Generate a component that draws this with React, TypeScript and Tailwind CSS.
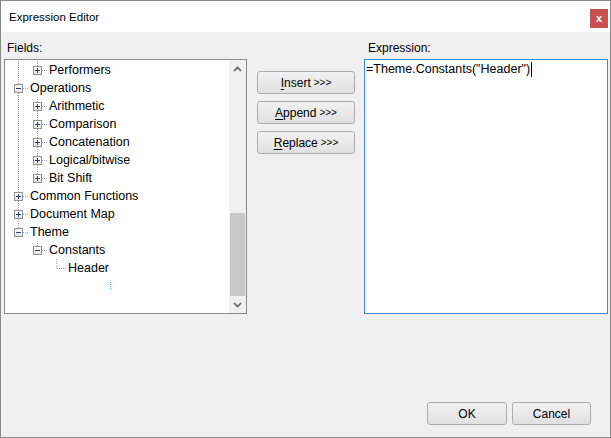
import React from 'react';

type Node = {
  label: string;
  level: number;
  // for each ancestor level, whether a vertical guide passes through
  guides: boolean[];
  last: boolean;
  box: 'plus' | 'minus' | null;
};

const rows: Node[] = [
  { label: 'Performers', level: 1, guides: [true], last: true, box: 'plus' },
  { label: 'Operations', level: 0, guides: [], last: false, box: 'minus' },
  { label: 'Arithmetic', level: 1, guides: [true], last: false, box: 'plus' },
  { label: 'Comparison', level: 1, guides: [true], last: false, box: 'plus' },
  { label: 'Concatenation', level: 1, guides: [true], last: false, box: 'plus' },
  { label: 'Logical/bitwise', level: 1, guides: [true], last: false, box: 'plus' },
  { label: 'Bit Shift', level: 1, guides: [true], last: true, box: 'plus' },
  { label: 'Common Functions', level: 0, guides: [], last: false, box: 'plus' },
  { label: 'Document Map', level: 0, guides: [], last: false, box: 'plus' },
  { label: 'Theme', level: 0, guides: [], last: true, box: 'minus' },
  { label: 'Constants', level: 1, guides: [false], last: true, box: 'minus' },
  { label: 'Header', level: 2, guides: [false, false], last: true, box: null },
];

const LINE = '#a0a0a0';

function GuideCell({ on }: { on: boolean }) {
  return (
    <svg width="19" height="18" className="shrink-0" shapeRendering="crispEdges">
      {on && <line x1="9.5" y1="0" x2="9.5" y2="18" stroke={LINE} strokeDasharray="1 1" />}
    </svg>
  );
}

function NodeCell({ last, box }: { last: boolean; box: Node['box'] }) {
  return (
    <svg width="19" height="18" className="shrink-0" shapeRendering="crispEdges">
      <line x1="9.5" y1="0" x2="9.5" y2={last ? 9 : 18} stroke={LINE} strokeDasharray="1 1" />
      <line x1="10" y1="9.5" x2="19" y2="9.5" stroke={LINE} strokeDasharray="1 1" />
      {box && (
        <>
          <defs>
            <linearGradient id="bx" x1="0" y1="0" x2="0" y2="1">
              <stop offset="0" stopColor="#ffffff" />
              <stop offset="1" stopColor="#e4e4e4" />
            </linearGradient>
          </defs>
          <rect x="5.5" y="5.5" width="8" height="8" fill="url(#bx)" stroke="#919191" />
          <line x1="7" y1="9.5" x2="12" y2="9.5" stroke="#23407a" />
          {box === 'plus' && <line x1="9.5" y1="7" x2="9.5" y2="12" stroke="#23407a" />}
        </>
      )}
    </svg>
  );
}

function Chevron({ up }: { up?: boolean }) {
  return (
    <svg width="9" height="6" viewBox="0 0 9 6">
      <polyline
        points={up ? '1,5 4.5,1.5 8,5' : '1,1 4.5,4.5 8,1'}
        fill="none"
        stroke="#606060"
        strokeWidth="1.6"
      />
    </svg>
  );
}

function WinButton({
  children,
  className = '',
}: {
  children: React.ReactNode;
  className?: string;
}) {
  return (
    <button
      type="button"
      className={
        'flex h-[23px] items-center justify-center rounded-[3px] border border-[#acacac] bg-gradient-to-b from-[#f2f2f2] to-[#e0e0e0] text-[12px] leading-none text-black ' +
        className
      }
    >
      {children}
    </button>
  );
}

export default function App() {
  return (
    <div className="flex h-[438px] w-[611px] flex-col border border-[#8a8a8a] bg-[#f0f0f0] font-['Liberation_Sans',Arial,sans-serif] text-black">
      {/* title bar */}
      <div className="flex h-[31px] shrink-0 items-start justify-between bg-white">
        <div className="pl-[8px] pt-[9px] text-[11.5px] leading-[14px]">Expression Editor</div>
        <div className="mr-[2px] mt-[8px] flex h-[19px] w-[18px] items-center justify-center bg-[#c75050] text-[11px] font-bold leading-none text-white">
          x
        </div>
      </div>

      {/* body */}
      <div className="flex flex-1 flex-col pl-[3px] pr-[2px] pt-[9px]">
        <div className="flex items-start">
          {/* fields */}
          <div className="flex w-[243px] flex-col">
            <div className="pl-[3px] text-[12px] leading-[14px]">Fields:</div>
            <div className="relative mt-[4px] flex h-[255px] border border-[#8a8a8a] bg-white">
              <div className="flex flex-1 flex-col pl-[4px] pt-[1px]">
                {rows.map((r) => (
                  <div key={r.label} className="flex h-[18px] items-center">
                    {r.guides.map((g, i) => (
                      <GuideCell key={i} on={g} />
                    ))}
                    <NodeCell last={r.last} box={r.box} />
                    <span className="ml-[2px] whitespace-nowrap text-[12.5px] leading-[18px]">
                      {r.label}
                    </span>
                  </div>
                ))}
              </div>
              <div className="absolute left-[105px] top-[222px] h-[7px] border-l border-dotted border-[#3399ff]" />
              {/* scrollbar */}
              <div className="flex w-[17px] flex-col bg-[#f0f0f0]">
                <div className="flex h-[17px] items-center justify-center">
                  <Chevron up />
                </div>
                <div className="flex flex-1 flex-col justify-end">
                  <div className="mx-[1px] h-[83px] bg-[#c8c8c8]" />
                </div>
                <div className="flex h-[17px] items-center justify-center">
                  <Chevron />
                </div>
              </div>
            </div>
          </div>

          {/* buttons */}
          <div className="ml-[10px] flex w-[98px] flex-col gap-[7px] pt-[30px]">
            <WinButton>
              <span>
                <span className="underline underline-offset-2">I</span>nsert
              </span>
              <span className="ml-[3px] text-[10px]">&gt;&gt;&gt;</span>
            </WinButton>
            <WinButton>
              <span>
                <span className="underline underline-offset-2">A</span>ppend
              </span>
              <span className="ml-[3px] text-[10px]">&gt;&gt;&gt;</span>
            </WinButton>
            <WinButton>
              <span>
                <span className="underline underline-offset-2">R</span>eplace
              </span>
              <span className="ml-[3px] text-[10px]">&gt;&gt;&gt;</span>
            </WinButton>
          </div>

          {/* expression */}
          <div className="ml-[9px] flex w-[244px] flex-col">
            <div className="pl-[4px] text-[12px] leading-[14px]">Expression:</div>
            <div className="mt-[4px] h-[255px] border border-[#3a8ad8] bg-white pl-[1px] pt-[1px]">
              <div className="flex items-center text-[12.5px] leading-[16px]">
                <span className="whitespace-nowrap">=Theme.Constants("Header")</span>
                <span className="ml-[1px] inline-block h-[15px] w-px bg-black" />
              </div>
            </div>
          </div>
        </div>

        {/* footer */}
        <div className="mt-auto flex justify-end gap-[5px] pb-[12px] pr-[17px]">
          <WinButton className="w-[80px]">OK</WinButton>
          <WinButton className="w-[79px]">Cancel</WinButton>
        </div>
      </div>
    </div>
  );
}
